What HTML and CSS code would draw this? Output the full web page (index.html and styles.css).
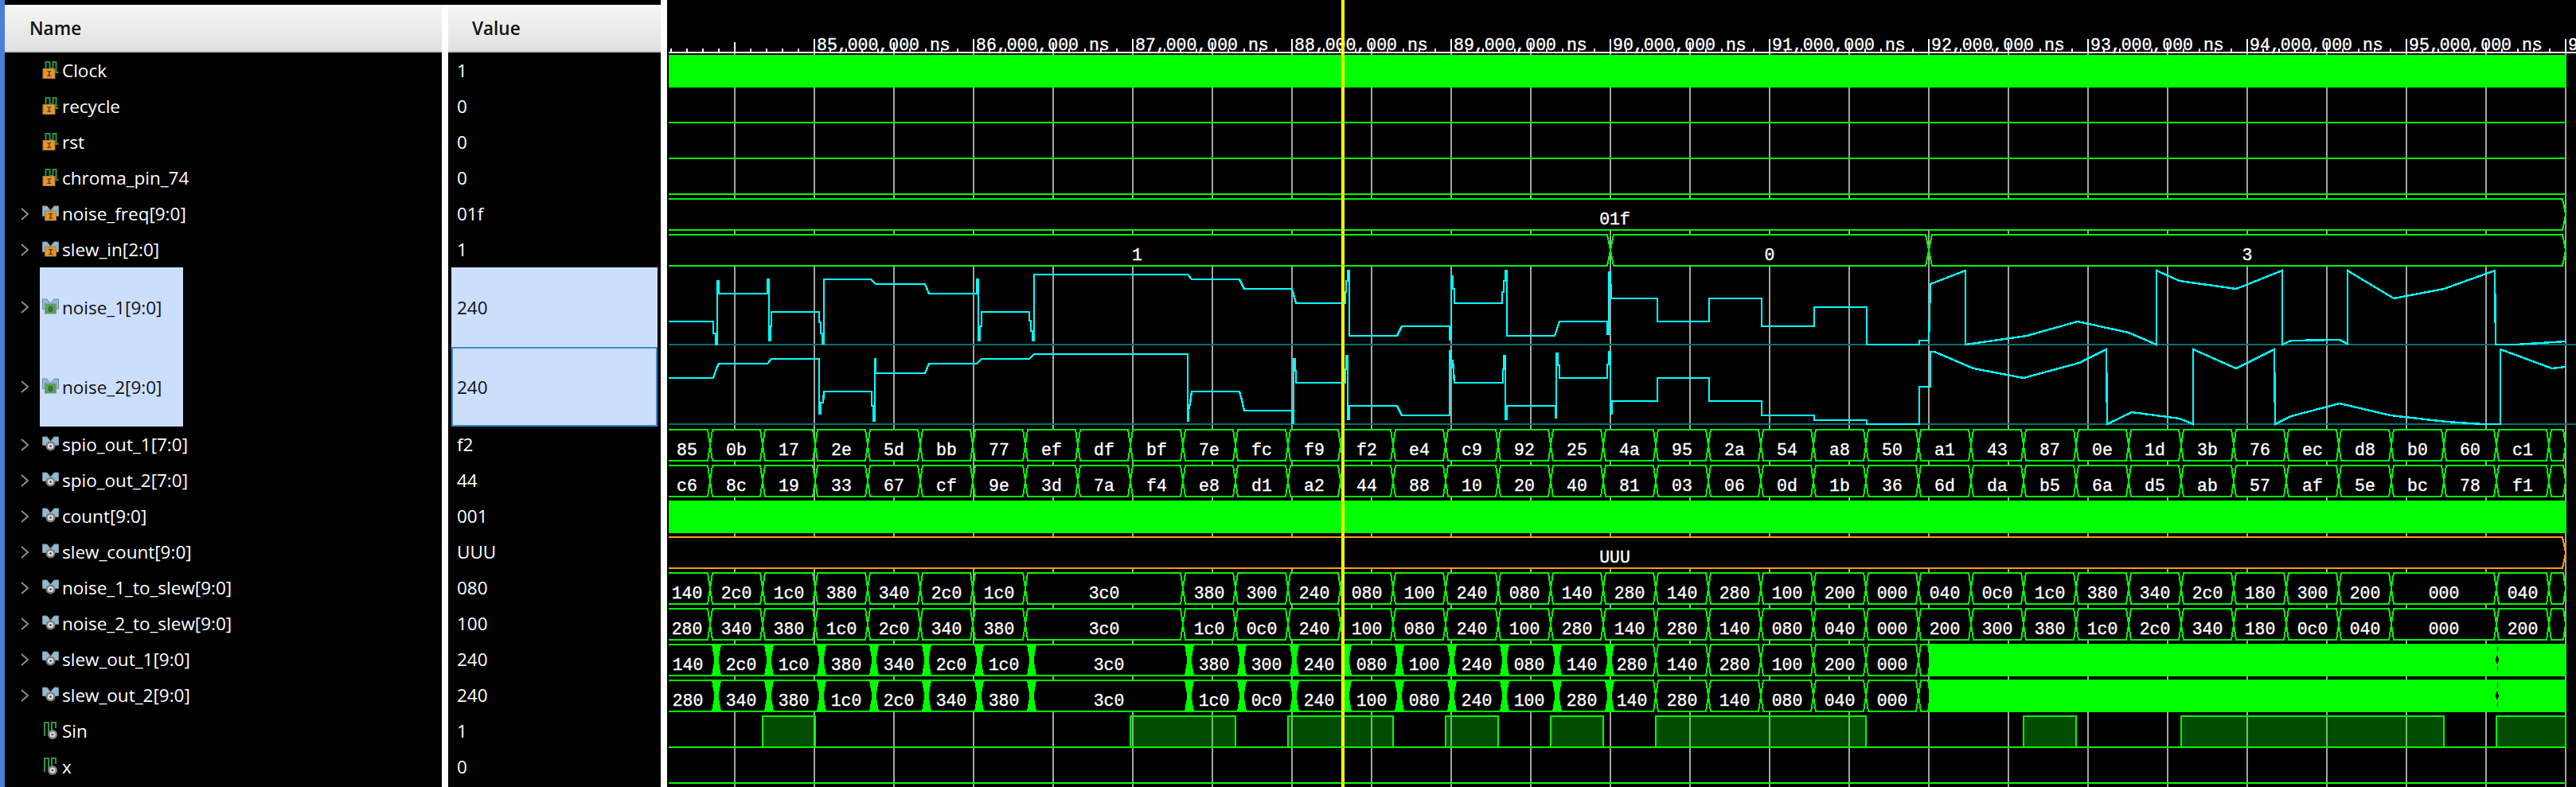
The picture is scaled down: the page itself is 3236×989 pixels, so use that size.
FILE: index.html
```html
<!DOCTYPE html>
<html lang="en">
<head>
  <meta charset="UTF-8">
  <title>Waveform</title>
  <link rel="stylesheet" href="styles.css">
</head>
<body>
  <svg class="defs">
    <symbol id="chev" viewBox="0 0 10 16">
      <path d="M1 1 L9 8 L1 15" fill="none" stroke="#8a8a8a" stroke-width="2"/>
    </symbol>
    <symbol id="ibit" viewBox="0 0 20 22">
      <path d="M4 9 V1 H9 V9 H13 V1 H17 V14 H20" fill="none" stroke="#2e9440" stroke-width="2"/>
      <rect x="0.5" y="9.5" width="15" height="12" fill="#f2921d" stroke="#8c8068"/>
      <text x="8" y="19" class="glyph">I</text>
    </symbol>
    <symbol id="ibus" viewBox="0 0 21 19">
      <path d="M0.5 0.5 H6 L10.5 6 L15 0.5 H20.5 V13 H0.5 Z" fill="#8fbbd1" stroke="#78909c"/>
      <rect x="3.5" y="6.5" width="14" height="12" fill="#f2921d" stroke="#8c8068"/>
      <text x="10.5" y="16" class="glyph">I</text>
    </symbol>
    <symbol id="obus" viewBox="0 0 21 19">
      <path d="M0.5 0.5 H6 L10.5 6 L15 0.5 H20.5 V13 H0.5 Z" fill="#8fbbd1" stroke="#78909c"/>
      <rect x="3.5" y="6.5" width="14" height="12" fill="#4fa84f" stroke="#78909c"/>
      <text x="10.5" y="16" class="glyph">0</text>
    </symbol>
    <symbol id="sbus" viewBox="0 0 21 19">
      <path d="M0.5 0.5 H6 L10.5 6 L15 0.5 H20.5 V11 H0.5 Z" fill="#8fbbd1" stroke="#78909c"/>
      <circle cx="10.5" cy="12" r="6" fill="#7d7d7d"/>
      <circle cx="10.5" cy="12" r="3.6" fill="#e2e2e2"/>
      <circle cx="10.5" cy="12" r="1.6" fill="#5c5c5c"/>
    </symbol>
    <symbol id="sbit" viewBox="0 0 21 22">
      <path d="M3 18 V1 H8 V16 M12 14 V1 H17 V8" fill="none" stroke="#2e9440" stroke-width="2"/>
      <circle cx="13" cy="16" r="6" fill="#7d7d7d"/>
      <circle cx="13" cy="16" r="3.6" fill="#e2e2e2"/>
      <circle cx="13" cy="16" r="1.6" fill="#5c5c5c"/>
    </symbol>
  </svg>

  <div class="app">
    <div class="names">
      <div class="head">Name</div>
      <div class="row"><span class="twist"></span><span class="node"><svg class="icon"><use href="#ibit"/></svg><span>Clock</span></span></div>
      <div class="row"><span class="twist"></span><span class="node"><svg class="icon"><use href="#ibit"/></svg><span>recycle</span></span></div>
      <div class="row"><span class="twist"></span><span class="node"><svg class="icon"><use href="#ibit"/></svg><span>rst</span></span></div>
      <div class="row"><span class="twist"></span><span class="node"><svg class="icon"><use href="#ibit"/></svg><span>chroma_pin_74</span></span></div>
      <div class="row"><svg class="twist"><use href="#chev"/></svg><span class="node"><svg class="icon"><use href="#ibus"/></svg><span>noise_freq[9:0]</span></span></div>
      <div class="row"><svg class="twist"><use href="#chev"/></svg><span class="node"><svg class="icon"><use href="#ibus"/></svg><span>slew_in[2:0]</span></span></div>
      <div class="row tall"><svg class="twist"><use href="#chev"/></svg><span class="node sel"><svg class="icon"><use href="#obus"/></svg><span>noise_1[9:0]</span></span></div>
      <div class="row tall"><svg class="twist"><use href="#chev"/></svg><span class="node sel"><svg class="icon"><use href="#obus"/></svg><span>noise_2[9:0]</span></span></div>
      <div class="row"><svg class="twist"><use href="#chev"/></svg><span class="node"><svg class="icon"><use href="#sbus"/></svg><span>spio_out_1[7:0]</span></span></div>
      <div class="row"><svg class="twist"><use href="#chev"/></svg><span class="node"><svg class="icon"><use href="#sbus"/></svg><span>spio_out_2[7:0]</span></span></div>
      <div class="row"><svg class="twist"><use href="#chev"/></svg><span class="node"><svg class="icon"><use href="#sbus"/></svg><span>count[9:0]</span></span></div>
      <div class="row"><svg class="twist"><use href="#chev"/></svg><span class="node"><svg class="icon"><use href="#sbus"/></svg><span>slew_count[9:0]</span></span></div>
      <div class="row"><svg class="twist"><use href="#chev"/></svg><span class="node"><svg class="icon"><use href="#sbus"/></svg><span>noise_1_to_slew[9:0]</span></span></div>
      <div class="row"><svg class="twist"><use href="#chev"/></svg><span class="node"><svg class="icon"><use href="#sbus"/></svg><span>noise_2_to_slew[9:0]</span></span></div>
      <div class="row"><svg class="twist"><use href="#chev"/></svg><span class="node"><svg class="icon"><use href="#sbus"/></svg><span>slew_out_1[9:0]</span></span></div>
      <div class="row"><svg class="twist"><use href="#chev"/></svg><span class="node"><svg class="icon"><use href="#sbus"/></svg><span>slew_out_2[9:0]</span></span></div>
      <div class="row"><span class="twist"></span><span class="node"><svg class="icon"><use href="#sbit"/></svg><span>Sin</span></span></div>
      <div class="row"><span class="twist"></span><span class="node"><svg class="icon"><use href="#sbit"/></svg><span>x</span></span></div>
    </div>

    <div class="values">
      <div class="head">Value</div>
      <div class="row val">1</div>
      <div class="row val">0</div>
      <div class="row val">0</div>
      <div class="row val">0</div>
      <div class="row val">01f</div>
      <div class="row val">1</div>
      <div class="row val tall sel">240</div>
      <div class="row val tall sel focus">240</div>
      <div class="row val">f2</div>
      <div class="row val">44</div>
      <div class="row val">001</div>
      <div class="row val">UUU</div>
      <div class="row val">080</div>
      <div class="row val">100</div>
      <div class="row val">240</div>
      <div class="row val">240</div>
      <div class="row val">1</div>
      <div class="row val">0</div>
    </div>

    <div class="wave">
      <svg id="wave" width="2398" height="989" viewBox="838 0 2398 989"></svg>
    </div>
  </div>

  <script src="wave.js"></script>
</body>
</html>
```

FILE: styles.css
```css
:root {
  --selected: #cbdefc;
  --focus: #3d8bc8;
}

* {
  box-sizing: border-box;
}

body {
  margin: 0;
  background-color: #000;
  color: #fff;
  font-family: 'Open Sans', 'Noto Sans', sans-serif;
  font-size: 22.5px;
  overflow: hidden;
}

.defs {
  display: none;
}

.glyph {
  font-family: 'Liberation Mono', monospace;
  font-size: 11px;
  font-weight: bold;
  text-anchor: middle;
  fill: #4a4a3a;
}

.app {
  display: flex;
  height: 989px;
}

.names {
  width: 555px;
  padding-top: 6px;
  border-left: 6px solid #4a7fd4;
  flex: none;
}

.values {
  width: 275px;
  margin-top: 6px;
  border-left: 8px solid #fff;
  flex: none;
}

.head {
  height: 60px;
  display: flex;
  align-items: center;
  padding-left: 31px;
  background: linear-gradient(#f6f6f6, #e1e1e1);
  border-bottom: 2px solid #c0c0c0;
  color: #111;
  font-weight: 600;
}

.values .head {
  padding-left: 30px;
}

.row {
  height: 45px;
  display: flex;
  align-items: center;
}

.row.tall {
  height: 100px;
}

.twist {
  width: 10px;
  height: 16px;
  margin-left: 20px;
  flex: none;
}

.node {
  height: 100%;
  margin-left: 14px;
  padding: 0 27px 0 3px;
  display: flex;
  align-items: center;
  gap: 4px;
}

.node.sel {
  background-color: var(--selected);
  color: #111;
}

.icon {
  width: 21px;
  height: 22px;
  margin-top: -2px;
  flex: none;
}

.val {
  padding-left: 11px;
}

.val.sel {
  margin: 0 4px;
  padding-left: 7px;
  background-color: var(--selected);
  color: #111;
}

.val.focus {
  border: 2px solid var(--focus);
  padding-left: 5px;
}

.wave {
  flex: 1;
  border-left: 8px solid #fff;
}

#wave {
  display: block;
  shape-rendering: crispEdges;
}

#wave text {
  font-family: 'Liberation Mono', monospace;
  font-size: 21.5px;
  fill: #fff;
  stroke: #fff;
  stroke-width: 0.35px;
  text-anchor: middle;
}

#wave text.time {
  text-anchor: start;
}
```

FILE: wave.js
```js
const svg = document.getElementById('wave');
const LEFT = 840;
const RIGHT = 3223;
const GREEN = '#00f800';
const CYAN = '#00ffff';
const ORANGE = '#ffa000';

function add(tag, attrs, text) {
  const el = document.createElementNS('http://www.w3.org/2000/svg', tag);
  for (const key in attrs) el.setAttribute(key, attrs[key]);
  if (text) el.textContent = text;
  svg.appendChild(el);
  return el;
}

function line(x1, y1, x2, y2, color) {
  add('line', { x1, y1, x2, y2, stroke: color, 'stroke-width': 2 });
}

function solid(top) {
  add('rect', { x: LEFT, y: top + 3, width: RIGHT + 1 - LEFT, height: 41, fill: '#0f0' });
}

function low(top) {
  line(LEFT, top + 43, RIGHT, top + 43, GREEN);
}

// one bus row: a black cell with crossed ends between each pair of edges
function bus(top, edges, color) {
  const t = top + 4, b = top + 43, m = top + 23.5;
  for (let i = 0; i < edges.length - 1; i++) {
    const a = edges[i], z = edges[i + 1];
    const r = z.c - z.hw, mr = z.c - (z.gap || 0);
    let d;
    if (a.open) {
      d = `M${LEFT} ${t} H${r} L${mr} ${m} L${r} ${b} H${LEFT}`;
    } else {
      const l = a.c + a.hw, ml = a.c + (a.gap || 0);
      d = `M${l} ${t} H${r} L${mr} ${m} L${r} ${b} H${l} L${ml} ${m} Z`;
    }
    add('path', { d, fill: '#000', stroke: color, 'stroke-width': 2 });
    if (a.label) add('text', { x: (a.tx + z.tx) / 2, y: top + 36 }, a.label);
  }
  edges.filter(e => e.gap).forEach(e => {
    const pts = [[e.c - e.hw, top + 3], [e.c + e.hw, top + 3], [e.c + e.gap, m], [e.c + e.hw, top + 44],
      [e.c - e.hw, top + 44], [e.c - e.gap, m]];
    add('polygon', { points: pts.join(' '), fill: '#0f0' });
  });
}

function edge(c, label, hw) {
  return { c, label, hw: hw || 3, tx: c };
}

// tokens: first is the cell before the first clock edge, '-' keeps the previous value, '.' is blank
function clocked(values, lastSolid) {
  const tokens = values.split(' ');
  const edges = [{ open: true, label: tokens[0], tx: lastSolid > 0 ? 830 : 834 }];
  tokens.slice(1).forEach((v, k) => {
    if (v === '-') return;
    const t = 892 + 66 * k;
    const label = v === '.' ? '' : v;
    if (k <= lastSolid) edges.push({ c: t + 8, hw: 5, gap: 1.5, label, tx: t + 6 });
    else edges.push(edge(t, label));
  });
  return edges;
}

function analog(points) {
  add('polyline', { points, fill: 'none', stroke: CYAN, 'stroke-width': 2.4 });
}

function pulses(top, ranges) {
  const hi = top + 4, lo = top + 43;
  add('rect', { x: LEFT, y: lo - 1, width: RIGHT - LEFT, height: 2, fill: GREEN });
  ranges.forEach(([a, z]) => {
    add('rect', { x: a, y: hi, width: z - a, height: lo - hi, fill: 'rgba(0,255,0,0.3)' });
    add('path', { d: `M${a} ${lo} V${hi} H${z} V${lo}`, fill: 'none', stroke: GREEN, 'stroke-width': 2 });
  });
}

// grid under everything
for (let x = 923; x <= RIGHT; x += 100) line(x, 66, x, 989, '#a4a4a4');

// time ruler
for (let h = 85; h <= 96; h++) {
  add('text', { class: 'time', x: 1026 + (h - 85) * 200, y: 63 }, `${h},000,000 ns`);
}
line(LEFT, 66, 3236, 66, '#fff');
for (let x = 843; x < 3236; x += 20) {
  const off = x - 1023;
  const y = off % 200 === 0 ? 49 : off % 100 === 0 ? 53 : 61;
  add('line', { x1: x, y1: y, x2: x, y2: 66, stroke: '#fff', 'stroke-width': 1.5 });
}

solid(66);
low(111);
low(156);
low(201);

bus(246, [{ open: true, label: '01f', tx: 834 }, edge(RIGHT, '', 4)], GREEN);
bus(291, [{ open: true, label: '1', tx: 834 }, edge(2023, '0', 4), edge(2423, '3', 4), edge(RIGHT, '', 4)], GREEN);

// noise_1 / noise_2 analog traces
line(LEFT, 433, 3236, 433, '#0b6e6e');
line(LEFT, 533, 3236, 533, '#0b6e6e');

analog(`840,404 896,404 896,419 899,419 899,433 901,433 901,353 903,353 903,369 964,369 964,351 966,351
  966,428 968,428 968,410 969,410 969,392 1029,392 1029,405 1031,405 1031,419 1033,419 1033,432 1035,432
  1035,351 1094,351 1100,357 1162,357 1167,369 1227,369 1227,351 1229,351 1229,428 1231,428 1231,410 1233,410
  1233,392 1293,392 1293,403 1295,403 1295,416 1297,416 1297,428 1299,428 1299,345 1492,345 1497,351 1557,351
  1563,363 1623,363 1625,370 1628,381 1690,381 1690,367 1691,367 1691,353 1693,353 1693,340 1695,340 1695,422
  1755,422 1761,410 1821,410 1821,427 1823,427 1823,347 1825,347 1825,363 1827,363 1827,381 1887,381 1887,367
  1889,367 1889,353 1891,353 1891,340 1893,340 1893,422 1953,422 1959,404 2019,404 2019,420 2021,420 2021,342
  2023,342 2023,358 2024,358 2024,375 2082,375 2082,404 2147,404 2147,375 2213,375 2213,410 2279,410 2279,386
  2345,386 2345,433 2411,433 2411,428 2423,428 2425,357 2430,355 2469,340 2469,433 2546,422 2610,404 2674,418
  2709,433 2709,340 2738,353 2809,363 2867,340 2867,433 2878,428 2939,427 2949,432 2949,340 3007,375 3070,363
  3134,340 3135,433 3160,433 3223,429`);

analog(`840,475 896,475 898,469 900,463 903,457 964,457 969,451 1029,451 1029,520 1031,520 1031,506 1034,506
  1035,492 1095,492 1095,510 1097,510 1097,529 1099,529 1099,451 1100,451 1100,469 1162,469 1167,457 1227,457
  1233,451 1293,451 1299,445 1492,445 1492,529 1493,529 1493,515 1495,507 1497,492 1557,492 1560,503 1563,516
  1623,516 1623,532 1625,532 1625,451 1627,451 1627,466 1628,466 1628,481 1690,481 1690,464 1691,464 1691,447
  1693,447 1693,527 1695,527 1695,510 1755,510 1761,522 1821,522 1821,441 1823,441 1823,453 1825,453 1827,481
  1888,481 1888,464 1889,464 1889,447 1891,447 1891,527 1893,527 1893,510 1954,510 1954,525 1955,525 1955,444
  1957,444 1957,459 1959,459 1959,475 2019,475 2019,458 2021,458 2021,442 2023,442 2023,520 2025,520 2025,504
  2082,504 2082,475 2147,475 2147,504 2213,504 2213,522 2279,522 2279,528 2345,528 2345,533 2411,533 2411,486
  2425,486 2425,442 2430,442 2479,463 2542,475 2612,456 2646,439 2647,533 2678,518 2738,526 2755,533 2755,439
  2809,463 2857,439 2858,533 2878,523 2939,507 3003,522 3073,530 3119,533 3141,533 3141,439 3206,463 3223,461`);

bus(536, clocked('85 0b 17 2e 5d bb 77 ef df bf 7e fc f9 f2 e4 c9 92 25 4a 95 2a 54 a8 50 a1 43 87 0e 1d 3b 76 ec d8 b0 60 c1 .', -1).concat(edge(RIGHT, '')), GREEN);
bus(581, clocked('c6 8c 19 33 67 cf 9e 3d 7a f4 e8 d1 a2 44 88 10 20 40 81 03 06 0d 1b 36 6d da b5 6a d5 ab 57 af 5e bc 78 f1 .', -1).concat(edge(RIGHT, '')), GREEN);

solid(626);
bus(671, [{ open: true, label: 'UUU', tx: 834 }, edge(RIGHT, '', 4)], ORANGE);

bus(716, clocked('140 2c0 1c0 380 340 2c0 1c0 3c0 - - 380 300 240 080 100 240 080 140 280 140 280 100 200 000 040 0c0 1c0 380 340 2c0 180 300 200 000 - 040 .', -1).concat(edge(RIGHT, '')), GREEN);
bus(761, clocked('280 340 380 1c0 2c0 340 380 3c0 - - 1c0 0c0 240 100 080 240 100 280 140 280 140 080 040 000 200 300 380 1c0 2c0 340 180 0c0 040 000 - 200 .', -1).concat(edge(RIGHT, '')), GREEN);

// slew outputs lag the inputs, then saturate into a solid block from 92 ms
const slewBlocks = [
  [806, '140 2c0 1c0 380 340 2c0 1c0 3c0 - - 380 300 240 080 100 240 080 140 280 140 280 100 200 000 .'],
  [851, '280 340 380 1c0 2c0 340 380 3c0 - - 1c0 0c0 240 100 080 240 100 280 140 280 140 080 040 000 .']
];
slewBlocks.forEach(([top, values]) => {
  bus(top, clocked(values, 17).concat(edge(2425, '')), GREEN);
  add('rect', { x: 2423, y: top + 3, width: RIGHT + 1 - 2423, height: 41, fill: '#0f0' });
  add('path', { d: `M3137 ${top + 7} v6 M3137 ${top + 31} v6`, stroke: '#000', 'stroke-width': 1 });
  add('polygon', { points: `3137,${top + 16} 3139,${top + 23} 3137,${top + 30} 3135,${top + 23}`, fill: '#000' });
});

pulses(896, [[958, 1024], [1420, 1552], [1618, 1750], [1816, 1882], [1948, 2014], [2080, 2344], [2542, 2608], [2740, 3070], [3136, RIGHT]]);
low(941);

// yellow cursor
add('rect', { x: 1685, y: 0, width: 4, height: 989, fill: '#ff0' });
```
